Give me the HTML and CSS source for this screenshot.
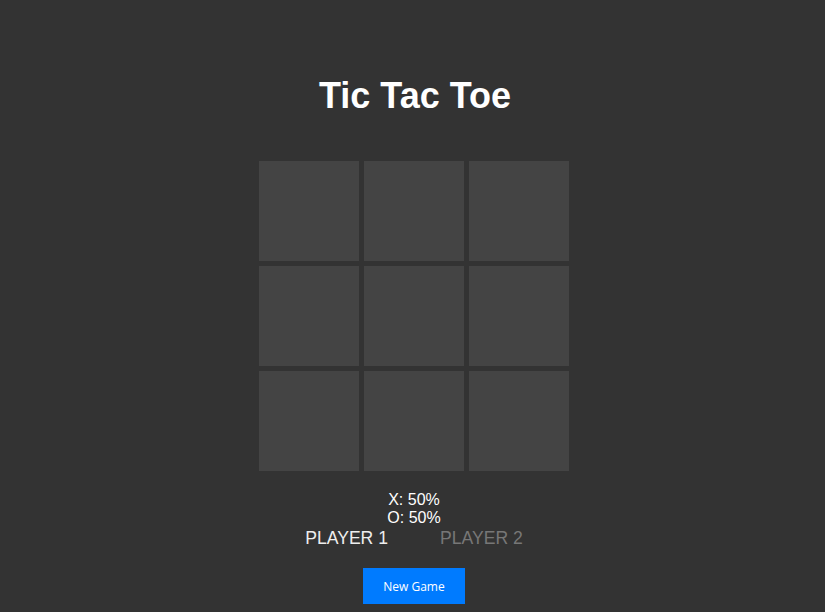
FILE: index.html
```html
<!DOCTYPE html>
<html>
<head>
<meta charset="utf-8">
<title>Tic Tac Toe</title>
<link rel="stylesheet" href="styles.css">
</head>
<body>
<main class="app">
  <h1 class="title">Tic Tac Toe</h1>
  <div class="board">
    <div class="cell"></div><div class="cell"></div><div class="cell"></div>
    <div class="cell"></div><div class="cell"></div><div class="cell"></div>
    <div class="cell"></div><div class="cell"></div><div class="cell"></div>
  </div>
  <div class="stats">
    <div class="stat">X: 50%</div>
    <div class="stat">O: 50%</div>
  </div>
  <div class="players">
    <span class="player active">PLAYER 1</span>
    <span class="player">PLAYER 2</span>
  </div>
  <button class="new-game">New Game</button>
</main>
</body>
</html>
```
FILE: styles.css
```css
html, body {
  margin: 0;
  padding: 0;
  background: #333333;
}
body {
  font-family: "Liberation Sans", Arial, sans-serif;
  color: #ffffff;
}
.app {
  display: flex;
  flex-direction: column;
  align-items: center;
  padding-left: 3px;
}
.title {
  margin: 75px 0 0 0;
  padding-left: 2px;
  font-size: 36px;
  line-height: 42px;
  font-weight: bold;
}
.board {
  margin-top: 44px;
  display: grid;
  grid-template-columns: repeat(3, 100px);
  grid-auto-rows: 100px;
  gap: 5px;
}
.cell {
  background: #444444;
}
.stats {
  margin-top: 20px;
  display: flex;
  flex-direction: column;
  align-items: center;
  font-size: 16px;
  line-height: 18px;
  color: #ffffff;
}
.players {
  display: flex;
  gap: 52px;
  font-size: 17.6px;
  line-height: 22px;
}
.player {
  color: #777777;
}
.player.active {
  color: #eeeeee;
}
.new-game {
  margin-top: 19px;
  width: 102px;
  height: 36px;
  border: none;
  background: #007bff;
  color: #ffffff;
  font-family: "Open Sans", "Noto Sans", sans-serif;
  font-size: 12px;
  cursor: pointer;
}
```
